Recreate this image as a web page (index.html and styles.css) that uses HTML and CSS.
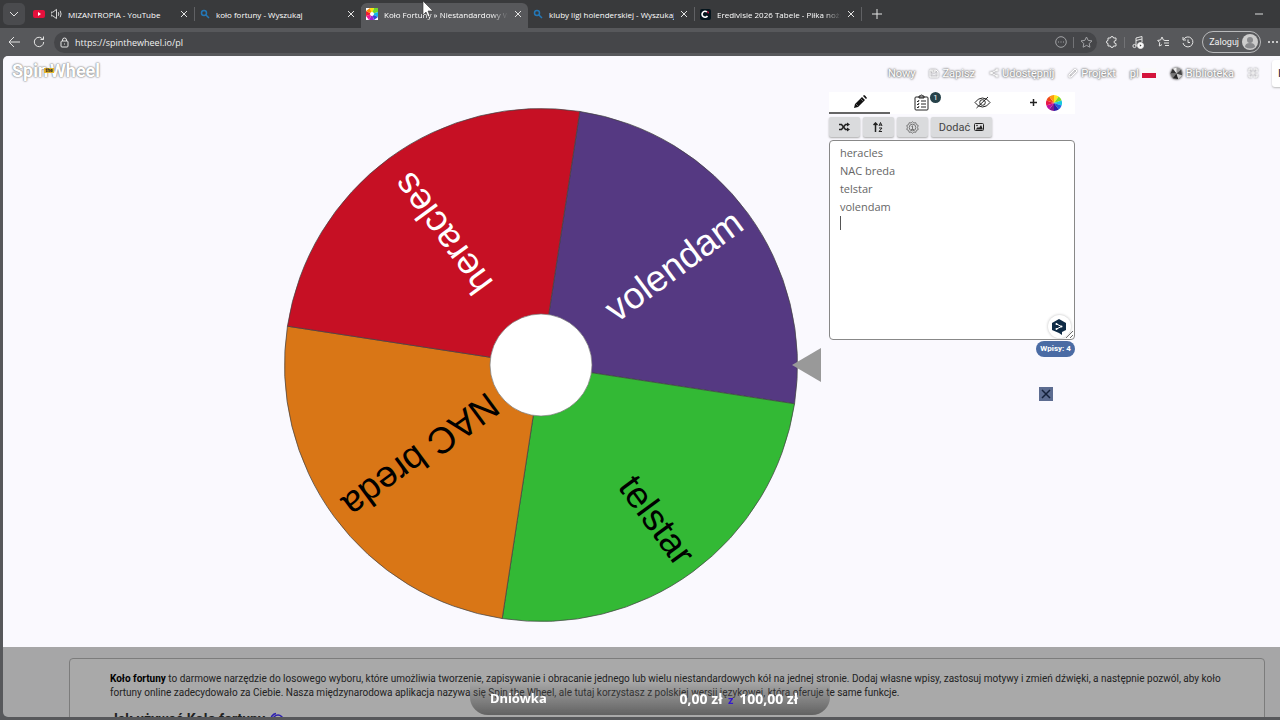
FILE: index.html
```
<!DOCTYPE html>
<html lang="pl">

<head>
    <meta charset="UTF-8">
    <meta name="viewport" content="width=device-width, initial-scale=1.0">
    <title>Koło Fortuny » Niestandardowy</title>
    <link rel="stylesheet" href="styles.css">
</head>

<body>
    <!-- Tab strip -->
    <div class="tab-strip">
        <button class="tab-menu" aria-label="Karty">
            <svg width="10" height="10" viewBox="0 0 10 10" class="line-icon"><path d="M1 3l4 4 4-4"/></svg>
        </button>
        <div class="tab">
            <svg width="12" height="12" viewBox="0 0 12 12"><rect y="2" width="12" height="8" rx="2" fill="#e5103c"/><path d="M5 4v4l3-2z" fill="#fff"/></svg>
            <svg width="11" height="12" viewBox="1 0 12 12" class="line-icon"><path d="M1 4h2l4-3v10L3 8H1zM9 4q1 2 0 4M11 2.500q2 3.500 0 7"/></svg>
            <span class="tab-title">MIZANTROPIA - YouTube</span>
            <button class="tab-close" aria-label="Zamknij"><svg width="8" height="8" viewBox="0 0 8 8" class="line-icon"><path d="M1 1l6 6M7 1L1 7"/></svg></button>
        </div>
        <div class="tab">
            <svg width="10" height="10" viewBox="0 0 10 10" class="search-icon"><circle cx="4" cy="4" r="2.500"/><path d="M6 6l3 3"/></svg>
            <span class="tab-title">koło fortuny - Wyszukaj</span>
            <button class="tab-close" aria-label="Zamknij"><svg width="8" height="8" viewBox="0 0 8 8" class="line-icon"><path d="M1 1l6 6M7 1L1 7"/></svg></button>
        </div>
        <div class="tab active">
            <svg width="12" height="12" viewBox="-6 -6 12 12">
                <rect x="-6" y="-6" width="12" height="12" fill="#fff"/>
                <path d="M0 0L-2 -6H2z" fill="#ffe600"/><path d="M0 0L2 -6H6V-2z" fill="#6fd62c"/>
                <path d="M0 0L6 -2V3z" fill="#12b5e8"/><path d="M0 0L6 3L2 6z" fill="#3048d8"/>
                <path d="M0 0L2 6H-3z" fill="#a020d0"/><path d="M0 0L-3 6L-6 2z" fill="#f01890"/>
                <path d="M0 0L-6 2V-3z" fill="#f02030"/><path d="M0 0L-6 -3L-2 -6z" fill="#ff8a00"/>
                <circle r="2" fill="#fff"/>
            </svg>
            <span class="tab-title fade">Koło Fortuny » Niestandardowy Wheel</span>
            <button class="tab-close" aria-label="Zamknij"><svg width="8" height="8" viewBox="0 0 8 8" class="line-icon"><path d="M1 1l6 6M7 1L1 7"/></svg></button>
        </div>
        <div class="tab">
            <svg width="10" height="10" viewBox="0 0 10 10" class="search-icon"><circle cx="4" cy="4" r="2.500"/><path d="M6 6l3 3"/></svg>
            <span class="tab-title">kluby ligi holenderskiej - Wyszukaj</span>
            <button class="tab-close" aria-label="Zamknij"><svg width="8" height="8" viewBox="0 0 8 8" class="line-icon"><path d="M1 1l6 6M7 1L1 7"/></svg></button>
        </div>
        <div class="tab">
            <svg width="11" height="11" viewBox="0 0 11 11"><rect width="11" height="11" rx="2" fill="#04141c"/><path d="M7 3a3 3 0 1 0 .5 4" fill="none" stroke="#fff" stroke-width="1.600"/><path d="M7 2l2 1-1 2z" fill="#f01848"/></svg>
            <span class="tab-title fade">Eredivisie 2026 Tabele - Piłka nożna</span>
            <button class="tab-close" aria-label="Zamknij"><svg width="8" height="8" viewBox="0 0 8 8" class="line-icon"><path d="M1 1l6 6M7 1L1 7"/></svg></button>
        </div>
        <button class="tab-new" aria-label="Nowa karta"><svg width="10" height="10" viewBox="0 0 10 10" class="line-icon"><path d="M5 0v10M0 5h10"/></svg></button>
        <button class="minimize" aria-label="Minimalizuj"><svg width="8" height="2" viewBox="0 0 8 2"><path d="M0 1h8" stroke="#ddd"/></svg></button>
    </div>

    <!-- Address bar -->
    <div class="toolbar">
        <button class="tool" aria-label="Wstecz"><svg width="12" height="12" viewBox="0 0 12 12" class="line-icon"><path d="M12 6H1M6 1L1 6l5 5"/></svg></button>
        <button class="tool" aria-label="Odśwież"><svg width="12" height="12" viewBox="0 0 12 12" class="line-icon"><path d="M10 3.500A4.700 4.700 0 1 0 10.700 6M10.500 0.500v3h-3"/></svg></button>
        <div class="address">
            <svg width="9" height="11" viewBox="0 0 9 11" class="line-icon"><rect x="1" y="4" width="7" height="6" rx="1"/><path d="M2.500 4V3a2 2 0 0 1 4 0v1M4 7h1"/></svg>
            <input class="address-input" type="text" aria-label="Adres" value="https://spinthewheel.io/pl">
            <svg width="12" height="12" viewBox="0 0 12 12" class="line-icon dim"><circle cx="6" cy="6" r="5.300"/><path d="M3 6h1M5.500 6h1M8 6h1"/></svg>
            <span class="divider"></span>
            <svg width="13" height="12" viewBox="0 0 13 12" class="line-icon dim"><path d="M6.500 1l1.700 3.400 3.800.5-2.800 2.600.7 3.700-3.400-1.800-3.400 1.800.7-3.700L1 4.900l3.800-.5z"/></svg>
        </div>
        <button class="tool" aria-label="Rozszerzenia"><svg width="12" height="12" viewBox="0 0 12 12" class="line-icon"><path d="M2 2h2.500a1.500 1.500 0 0 1 3 0H10v2.500q-2 0-2 1.500t2 1.500V10H7.500a1.500 1.500 0 0 1-3 0H2V7.500a1.500 1.500 0 0 1 0-3z"/></svg></button>
        <span class="divider"></span>
        <button class="tool" aria-label="Muzyka"><svg width="12" height="13" viewBox="0 0 12 13" class="line-icon"><circle cx="2.500" cy="10" r="1.600"/><path d="M4 10V2l6-1.500V6M4 4.500L10 3"/><circle cx="8.500" cy="9.500" r="3" fill="#fff"/><path d="M7.800 8.300v2.400l1.800-1.200z" fill="#444" stroke="none"/></svg></button>
        <button class="tool" aria-label="Ulubione"><svg width="12" height="12" viewBox="0 0 12 12" class="line-icon"><path d="M8 4.500L6.400 4 5 1 3.600 4 .7 4.400l2 2.200L2.300 10 5 8.600M8 4.500h4M7 7h5M8 9.500h4"/></svg></button>
        <button class="tool" aria-label="Historia"><svg width="12" height="12" viewBox="0 0 12 12" class="line-icon"><path d="M1.500 3.500A5 5 0 1 1 1 7M1 1v3h3M6 3.500V6.500h2"/></svg></button>
        <button class="login">Zaloguj
            <svg width="16" height="16" viewBox="0 0 16 16"><circle cx="8" cy="8" r="8" fill="#ccc"/><circle cx="8" cy="6" r="3" fill="#88898c"/><path d="M3 13q0-4 5-4t5 4q-5 3-10 0z" fill="#88898c"/></svg>
        </button>
        <button class="tool more" aria-label="Więcej"><svg width="12" height="4" viewBox="0 0 12 4" fill="#eee"><circle cx="2" cy="2" r="1"/><circle cx="6" cy="2" r="1"/><circle cx="10" cy="2" r="1"/></svg></button>
    </div>

    <!-- Page -->
    <div class="page">
        <main class="stage">
            <header class="site-header">
                <a href="#" class="logo">Spin<span class="logo-the">the</span>Wheel</a>
                <nav class="site-nav">
                    <a href="#">Nowy</a>
                    <a href="#"><svg width="10" height="10" viewBox="0 0 10 10"><path d="M1 2h6l2 2v5H1zM3 2v2h3V2M5 6v1"/></svg>Zapisz</a>
                    <a href="#"><svg width="10" height="10" viewBox="0 0 10 10"><path d="M8 2L2 5l6 3"/><circle cx="8" cy="2" r="1"/><circle cx="2" cy="5" r="1"/><circle cx="8" cy="8" r="1"/></svg>Udostępnij</a>
                    <a href="#"><svg width="10" height="10" viewBox="0 0 10 10"><path d="M1 7l6-6 2 2-6 6H1z"/></svg>Projekt</a>
                    <a href="#">pl<span class="flag"></span></a>
                    <a href="#"><svg width="13" height="13" viewBox="-7 -7 14 14" class="mono-wheel"><circle r="6.500" fill="#999"/><path d="M0 0L-4 -5 0 -6.500z" fill="#eee"/><path d="M0 0L-6.500 0-4 -5z" fill="#333"/><path d="M0 0L-4 5-6.500 0z" fill="#777"/><path d="M0 0L2 6-4 5z" fill="#222"/><path d="M0 0L6 2 2 6z" fill="#ccc"/><path d="M0 0L5 -4 6 2z" fill="#444"/></svg>Biblioteka</a>
                    <a href="#" aria-label="Pełny ekran"><svg width="10" height="10" viewBox="0 0 10 10"><path d="M1 4V1h3M6 1h3v3M9 6v3H6M4 9H1V6M5 3v4M3 5h4"/></svg></a>
                    <button class="edge-button">I</button>
                </nav>
            </header>

            <div class="workspace">
                <svg class="wheel" width="538" height="514" viewBox="-257 -257 538 514">
                    <g transform="rotate(8.700)" stroke="#444" stroke-width=".7">
                        <path d="M0 0V-256.500A256.500 256.500 0 0 1 256.500 0Z" fill="#553982"/>
                        <path d="M0 0H256.500A256.500 256.500 0 0 1 0 256.500Z" fill="#33b935"/>
                        <path d="M0 0V256.500A256.500 256.500 0 0 1-256.500 0Z" fill="#d97616"/>
                        <path d="M0 0H-256.500A256.500 256.500 0 0 1 0-256.500Z" fill="#c61024"/>
                    </g>
                    <circle r="51" fill="#fff" stroke="#777" stroke-width=".7"/>
                    <g class="wheel-labels">
                        <text x="246" y="11" transform="rotate(-36.300)" fill="#fff">volendam</text>
                        <text x="244" y="11" transform="rotate(53.700)">telstar</text>
                        <text x="242" y="11" transform="rotate(143.700)">NAC breda</text>
                        <text x="234" y="11" transform="rotate(233.700)" fill="#fff">heracles</text>
                    </g>
                    <path d="M251 0L280-17V17Z" fill="#999"/>
                </svg>

                <section class="panel">
                    <div class="panel-tabs">
                        <button class="panel-tab selected" aria-label="Edycja"><svg width="14" height="14" viewBox="0 0 14 14" fill="#111"><path d="M1 13l1-4 7-7 3 3-7 7zM10 1l1-1q1 0 3 3l-1 1z"/><path d="M3 9l2 2M8 4l2 2" stroke="#aaa" stroke-width=".6"/></svg></button>
                        <button class="panel-tab" aria-label="Wyniki"><svg width="15" height="17" viewBox="0 0 15 17" class="dark-icon"><rect x="1" y="3" width="13" height="13" rx="1"/><path d="M5 4V2h1.500a1 1 0 0 1 2 0H10v2zM3 7l1 1 1-2M3 10l1 1 1-2M3 13l1 1 1-2M7 7h5M7 10h5M7 13h5"/></svg><span class="count">1</span></button>
                        <button class="panel-tab" aria-label="Ukryj"><svg width="17" height="13" viewBox="0 0 17 13" class="dark-icon"><path d="M1 6.500Q4 2 8.500 2T16 6.500Q13 11 8.500 11T1 6.500zM2.500 12L14 1"/><circle cx="8.500" cy="6.500" r="2.800"/></svg></button>
                        <button class="panel-tab add-wheel" aria-label="Dodaj koło">
                            <svg width="7" height="7" viewBox="0 0 7 7" class="bold-icon"><path d="M3.500 0v7M0 3.500h7"/></svg>
                            <svg width="16" height="16" viewBox="-8 -8 16 16">
                                <path d="M0 0V-8A8 8 0 0 1 4.700-6.500z" fill="#ffe81c"/><path d="M0 0L4.700-6.500A8 8 0 0 1 7.600-2.500z" fill="#7ddb2a"/>
                                <path d="M0 0L7.600-2.500A8 8 0 0 1 7.600 2.500z" fill="#18c8e0"/><path d="M0 0L7.600 2.500A8 8 0 0 1 4.700 6.500z" fill="#2060e0"/>
                                <path d="M0 0L4.700 6.500A8 8 0 0 1 0 8z" fill="#2a20a8"/><path d="M0 0V8A8 8 0 0 1-4.700 6.500z" fill="#801890"/>
                                <path d="M0 0L-4.700 6.500A8 8 0 0 1-7.600 2.500z" fill="#c010a0"/><path d="M0 0L-7.600 2.500A8 8 0 0 1-7.600-2.500z" fill="#e81848"/>
                                <path d="M0 0L-7.600-2.500A8 8 0 0 1-4.700-6.500z" fill="#f04818"/><path d="M0 0L-4.700-6.500A8 8 0 0 1 0-8z" fill="#ff9a10"/>
                            </svg>
                        </button>
                    </div>
                    <div class="panel-actions">
                        <button class="action" aria-label="Losuj"><svg width="11" height="10" viewBox="0 0 11 10" class="bold-icon"><path d="M0 2.500h2.500l4 5H9M0 7.500h2.500l4-5H9"/><path d="M8 .5l3 2-3 2zM8 5.500l3 2-3 2z" fill="#222" stroke="none"/></svg></button>
                        <button class="action" aria-label="Sortuj"><svg width="10" height="10" viewBox="0 0 10 10" class="bold-icon"><path d="M2.500 10V1M.5 3l2-2 2 2"/><path d="M6 4l1.500-3.500L9 4M6.500 3h2M6 6h3L6 9.500h3" stroke-width="1"/></svg></button>
                        <button class="action" aria-label="Ustawienia"><svg width="13" height="13" viewBox="0 0 13 13" class="gear-icon"><path d="M6.500.7l1.400 1.300 1.900-.3.6 1.900 1.800.8-.6 2.100.6 2.100-1.800.8-.6 1.900-1.900-.3-1.400 1.300-1.400-1.300-1.900.3-.6-1.900-1.800-.8.6-2.100-.6-2.100 1.800-.8.6-1.900 1.900.3z"/><circle cx="6.500" cy="6.500" r="3.300"/><path d="M6.500 4.500v4M5.500 5.500h1M5 8.500h3"/></svg></button>
                        <button class="action wide">Dodać <svg width="10" height="8" viewBox="0 0 10 8"><rect x=".5" y=".5" width="9" height="7" rx="1" fill="none" stroke="#222"/><path d="M1.500 6.500L4 4l1 1 2-3 2 4.500z" fill="#222"/><circle cx="3" cy="2.500" r=".8" fill="#222"/></svg></button>
                    </div>
                    <div class="entries">
                        <textarea class="entries-input" aria-label="Wpisy" spellcheck="false">heracles
NAC breda
telstar
volendam
</textarea>
                        <span class="caret"></span>
                        <button class="helper" aria-label="Tłumacz"><svg width="14" height="16" viewBox="0 0 14 16"><path d="M7 0l7 4v7l-4 2v3l-3-2-7-3V4z" fill="#0f2b46"/><path d="M4.500 5l5 2.500-5 2.500" fill="none" stroke="#fff"/><circle cx="4.500" cy="5" r="1" fill="#fff"/><circle cx="9.500" cy="7.500" r="1" fill="#fff"/><circle cx="4.500" cy="10" r="1" fill="#fff"/></svg></button>
                    </div>
                    <span class="entry-count">Wpisy: 4</span>
                    <button class="dismiss" aria-label="Zamknij"><svg width="10" height="10" viewBox="0 0 10 10"><path d="M1 1l8 8M9 1L1 9" stroke="#14213a" stroke-width="1.500"/></svg></button>
                </section>
            </div>
        </main>

        <section class="about">
            <article class="about-box">
                <p><strong>Koło fortuny</strong> to darmowe narzędzie do losowego wyboru, które umożliwia tworzenie, zapisywanie i obracanie jednego lub wielu niestandardowych kół na jednej stronie. Dodaj własne wpisy, zastosuj motywy i zmień dźwięki, a następnie pozwól, aby koło fortuny online zadecydowało za Ciebie. Nasza międzynarodowa aplikacja nazywa się Spin the Wheel, ale tutaj korzystasz z polskiej wersji językowej, która oferuje te same funkcje.</p>
                <h2>Jak używać Koło fortuny <svg width="14" height="14" viewBox="0 0 14 14"><path d="M2 8A6 6 0 0 1 7 1.500M4 8a5 5 0 1 1 5 5M7 8a2 2 0 1 1 2 2" fill="none" stroke="#2c1fb0" stroke-width="1.500"/></svg></h2>
            </article>
        </section>
    </div>

    <!-- Daily goal overlay -->
    <div class="goal">
        <span>Dniówka</span>
        <span class="goal-amount">0,00 zł <span class="goal-of">z</span> 100,00 zł</span>
    </div>

    <svg class="cursor" width="12" height="17" viewBox="0 0 12 17"><path d="M1 0v14l3-3 2 5 2-1-2-5h5z" fill="#fff" stroke="#333" stroke-width=".6"/></svg>
</body>

</html>
```
FILE: styles.css
```
* {
    box-sizing: border-box;
}

body {
    margin: 0;
    height: 100vh;
    display: flex;
    flex-direction: column;
    overflow: hidden;
    background: #57585b;
    font-family: Roboto, "Liberation Sans", sans-serif;
    font-size: 11px;
    color: #222;
}

button {
    display: flex;
    align-items: center;
    justify-content: center;
    margin: 0;
    padding: 0;
    border: 0;
    background: none;
    font: inherit;
    color: inherit;
}

svg {
    flex: none;
}

.line-icon {
    fill: none;
    stroke: #e4e4e4;
}

.line-icon.dim {
    stroke: #a2a3a6;
}

/* Tab strip */

.tab-strip {
    display: flex;
    align-items: center;
    flex: none;
    height: 28px;
    padding-left: 3px;
    background: #393a3c;
    font-family: "Open Sans", "Noto Sans", sans-serif;
    font-size: 8px;
    color: #fff;
}

.tab-menu {
    width: 22px;
    height: 22px;
    margin-right: 3px;
    border-radius: 5px;
    background: #4a4b4e;
}

.tab {
    display: flex;
    align-items: center;
    gap: 6px;
    width: 167px;
    height: 14px;
    padding: 0 6px 0 5px;
    border-right: 1px solid #606164;
}

.tab.active {
    height: 25px;
    align-self: flex-end;
    margin-left: -1px;
    padding-bottom: 3px;
    border-right: 0;
    border-radius: 6px 6px 0 0;
    background: #57585b;
}

.tab-title {
    flex: 1;
    overflow: hidden;
    white-space: nowrap;
}

.fade {
    mask-image: linear-gradient(to right, #000 86%, transparent);
}

.search-icon {
    fill: none;
    stroke: #2478b8;
    stroke-width: 1.5;
}

.tab-new {
    width: 30px;
}

.minimize {
    margin-left: auto;
    margin-right: 17px;
}

/* Address bar */

.toolbar {
    display: flex;
    align-items: center;
    flex: none;
    height: 28px;
    padding-left: 1px;
    color: #f2f2f2;
}

.tool {
    width: 25px;
    height: 22px;
}

.address {
    display: flex;
    align-items: center;
    gap: 6px;
    flex: 1;
    height: 21px;
    margin: 0 2px 0 3px;
    padding: 0 4px 0 6px;
    border-radius: 11px;
    background: #454649;
}

.address-input {
    flex: 1;
    min-width: 0;
    padding: 0;
    border: 0;
    outline: 0;
    background: none;
    font-family: "Open Sans", "Noto Sans", sans-serif;
    font-size: 9px;
    color: #f0f0f0;
}

.divider {
    width: 1px;
    height: 11px;
    background: #727376;
}

.login {
    gap: 3px;
    height: 22px;
    margin: 0 2px;
    padding: 0 2px 0 6px;
    border: 1px solid #b9babc;
    border-radius: 11px;
    font-size: 9px;
}

.more {
    width: 20px;
    margin-right: -3px;
}

/* Page */

.page {
    flex: 1;
    min-height: 0;
    margin: 0 0 3px 3px;
    overflow: hidden;
    border-radius: 5px 0 0 5px;
    background: #a6a6a7;
}

.stage {
    padding-bottom: 25px;
    background: #faf9fe;
}

.site-header {
    display: flex;
    justify-content: space-between;
    height: 36px;
    padding-left: 9px;
}

.logo {
    display: flex;
    align-items: center;
    height: 28px;
    font-size: 18px;
    font-weight: bold;
    color: #fff;
    text-decoration: none;
    text-shadow: 0 0 1px #888, 0 0 2px #999, 0 0 2px #aaa;
}

.logo-the {
    z-index: 1;
    width: 10px;
    margin: 0 -4px;
    background: #e3b52c;
    font-size: 5px;
    line-height: 5px;
    text-align: center;
    color: #222;
    text-shadow: none;
}

.site-nav {
    display: flex;
    align-items: center;
    gap: 14px;
    height: 34px;
}

.site-nav a {
    display: flex;
    align-items: center;
    gap: 3px;
    color: #fff;
    text-decoration: none;
    text-shadow: 0 0 2px #777, 0 0 2px #888, 0 0 3px #999;
}

.site-nav svg {
    fill: none;
    stroke: #fff;
    filter: drop-shadow(0 0 1px #555);
}

.site-nav .mono-wheel {
    stroke: none;
}

.flag {
    width: 14px;
    height: 10px;
    background: linear-gradient(#fafafa 50%, #d4143c 50%);
}

.edge-button {
    width: 24px;
    height: 27px;
    margin-right: -16px;
    padding-left: 6px;
    justify-content: flex-start;
    border-radius: 3px;
    background: #fff;
    box-shadow: 0 1px 2px #bbb;
}

.workspace {
    display: flex;
    align-items: flex-start;
    gap: 7px;
    padding-left: 22%;
}

.wheel {
    margin-top: 16px;
}

.wheel-labels {
    font-family: "Liberation Sans", Arial, sans-serif;
    font-size: 37px;
    text-anchor: end;
}

/* Entries panel */

.panel {
    display: flex;
    flex-direction: column;
    width: 246px;
}

.panel-tabs {
    display: flex;
    height: 22px;
    background: #fff;
}

.panel-tab {
    position: relative;
    width: 25%;
    border-bottom: 1px solid transparent;
}

.panel-tab.selected {
    border-bottom: 2px solid #666;
}

.count {
    position: absolute;
    top: 0;
    right: 11px;
    width: 11px;
    height: 11px;
    border-radius: 50%;
    background: #27424a;
    font-size: 8px;
    line-height: 11px;
    color: #fff;
}

.add-wheel {
    gap: 9px;
    padding-left: 4px;
}

.dark-icon {
    fill: none;
    stroke: #222;
}

.bold-icon {
    fill: none;
    stroke: #222;
    stroke-width: 1.5;
}

.gear-icon {
    fill: none;
    stroke: #777;
}

.panel-actions {
    display: flex;
    gap: 3px;
    margin: 3px 0;
}

.action {
    width: 31px;
    height: 20px;
    gap: 4px;
    border-radius: 2px;
    background: #dadbdd;
    box-shadow: 0 1px 2px #aaa;
    color: #444;
}

.action.wide {
    width: 61px;
}

.entries {
    position: relative;
    height: 200px;
}

.entries-input {
    display: block;
    width: 100%;
    height: 100%;
    padding: 3px 10px;
    border: 1px solid #888;
    border-radius: 4px;
    outline: 0;
    background: #fff;
    font-family: "Open Sans", "Noto Sans", sans-serif;
    font-size: 11px;
    line-height: 18px;
    color: #666;
}

.caret {
    position: absolute;
    left: 11px;
    top: 76px;
    width: 1px;
    height: 14px;
    background: #555;
}

.helper {
    position: absolute;
    right: 4px;
    bottom: 2px;
    width: 23px;
    height: 23px;
    border-radius: 50%;
    background: #fff;
    box-shadow: 0 0 3px #bbb;
}

.entry-count {
    align-self: flex-end;
    margin-top: 1px;
    padding: 0 4px;
    border-radius: 8px;
    background: #4a6ba4;
    font-size: 8px;
    font-weight: bold;
    line-height: 16px;
    color: #fff;
}

.dismiss {
    align-self: flex-end;
    width: 14px;
    height: 14px;
    margin: 30px 22px 0 0;
    background: #5c6c90;
}

/* About */

.about {
    padding: 11px 15px 0 66px;
}

.about-box {
    height: 200px;
    padding: 13px 32px 0 40px;
    border: 1px solid #7c7c7c;
    border-radius: 4px;
    background: #a9a9a9;
}

.about-box p {
    margin: 0;
    font-size: 10px;
    line-height: 14px;
}

.about-box strong {
    color: #000;
}

.about-box h2 {
    display: flex;
    align-items: center;
    gap: 4px;
    margin: 10px 0;
    font-size: 14px;
    line-height: 18px;
}

/* Daily goal overlay */

.goal {
    position: fixed;
    left: 50%;
    bottom: 5px;
    display: flex;
    justify-content: space-between;
    align-items: center;
    width: 360px;
    height: 34px;
    margin-left: -170px;
    padding: 0 32px 0 20px;
    border-radius: 0 0 18px 18px;
    background: linear-gradient(rgba(90, 90, 90, 0), rgba(90, 90, 90, 0.9));
    font-family: "Noto Sans", sans-serif;
    font-size: 13px;
    font-weight: bold;
    color: #fff;
}

.goal-amount {
    font-size: 14px;
}

.goal-of {
    margin: 0 2px;
    font-size: 11px;
    color: #3418d0;
}

.cursor {
    position: fixed;
    left: 422px;
    top: 1px;
}
```
